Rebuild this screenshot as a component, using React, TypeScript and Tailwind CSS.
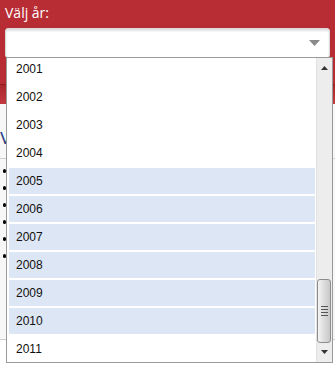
import { useState } from 'react'

const YEARS = ['2001', '2002', '2003', '2004', '2005', '2006', '2007', '2008', '2009', '2010', '2011']
const SELECTED = ['2005', '2006', '2007', '2008', '2009', '2010']

function ScrollArrow({ down }: { down?: boolean }) {
  return (
    <svg width="7" height="4" viewBox="0 0 7 4" className={down ? 'rotate-180' : ''}>
      <path d="M3.5 0 L7 4 L0 4 Z" fill="#333" />
    </svg>
  )
}

export default function App() {
  const [year, setYear] = useState<string | null>(null)

  return (
    <div className="relative w-[335px] h-[365px] overflow-hidden bg-white" style={{ fontFamily: '"DejaVu Sans", Verdana, sans-serif' }}>
      {/* page behind the open dropdown */}
      <div className="bg-[#b82c33] h-[84px] px-[5px] pt-[3px]">
        <p className="text-white text-[14px] leading-[20px]" style={{ fontFamily: '"Open Sans", sans-serif' }}>
          Välj år:
        </p>
        <div className="mt-[5px] h-[30px] bg-white rounded-[3px] border border-[#d9d9d9] shadow-[inset_0_2px_2px_rgba(0,0,0,0.12)] flex items-center justify-end pr-[9px]">
          <span className="text-[13px] flex-1 pl-2 text-gray-800">{year ?? ''}</span>
          <svg width="11" height="6" viewBox="0 0 11 6">
            <path d="M0 0 L11 0 L5.5 6 Z" fill="#8a8a8a" />
          </svg>
        </div>
      </div>
      <div className="h-[20px] bg-gradient-to-b from-[#a9262c] to-[#c23a40] border-t border-[#8e1d22]" />
      <div className="bg-[#f7f7f7] h-[236px] border-b border-[#cfcfcf]">
        <p className="pt-[26px] text-[16px] leading-[18px] text-[#1d3f86]">V</p>
        <div className="mt-[10px] border-t border-[#cfcfcf]" />
        <ul className="pt-[8px] pl-[3px] space-y-[9px]">
          {[0, 1, 2, 3, 4, 5].map((i) => (
            <li key={i} className="flex items-center h-[8px]">
              <span className="w-[3px] h-[4px] bg-black rounded-full" />
            </li>
          ))}
        </ul>
      </div>

      {/* open year list */}
      <div className="absolute left-[6px] top-[57px] w-[327px] h-[306px] bg-white border border-[#9a9a9a] flex">
        <div className="flex-1 pl-[2px] pr-[1px] -mt-[3px]">
          {YEARS.map((y) => (
            <button
              key={y}
              onClick={() => setYear(y)}
              className="block w-full h-[28px] py-[1px] text-left"
            >
              <span
                className={`flex items-center h-[26px] pl-[7px] text-[12px] text-[#111] ${
                  SELECTED.includes(y) ? 'bg-[#dde6f5]' : ''
                }`}
                style={{ fontFamily: 'Tahoma, "Liberation Sans", Arial, sans-serif' }}
              >
                {y}
              </span>
            </button>
          ))}
        </div>
        <div className="w-[16px] bg-[#ededed] border-l border-[#e2e2e2] flex flex-col items-center">
          <div className="h-[20px] flex items-center justify-center">
            <ScrollArrow />
          </div>
          <div className="flex-1 w-full relative">
            <div className="absolute left-0 right-[1px] top-[201px] h-[64px] rounded-[3px] border border-[#8c8c8c] bg-gradient-to-r from-[#f4f4f4] via-[#dcdcdc] to-[#c8c8c8] flex flex-col items-center justify-center gap-[2px]">
              <span className="w-[7px] h-[1px] bg-[#555]" />
              <span className="w-[7px] h-[1px] bg-[#555]" />
              <span className="w-[7px] h-[1px] bg-[#555]" />
              <span className="w-[7px] h-[1px] bg-[#555]" />
            </div>
          </div>
          <div className="h-[20px] flex items-center justify-center">
            <ScrollArrow down />
          </div>
        </div>
      </div>
    </div>
  )
}
